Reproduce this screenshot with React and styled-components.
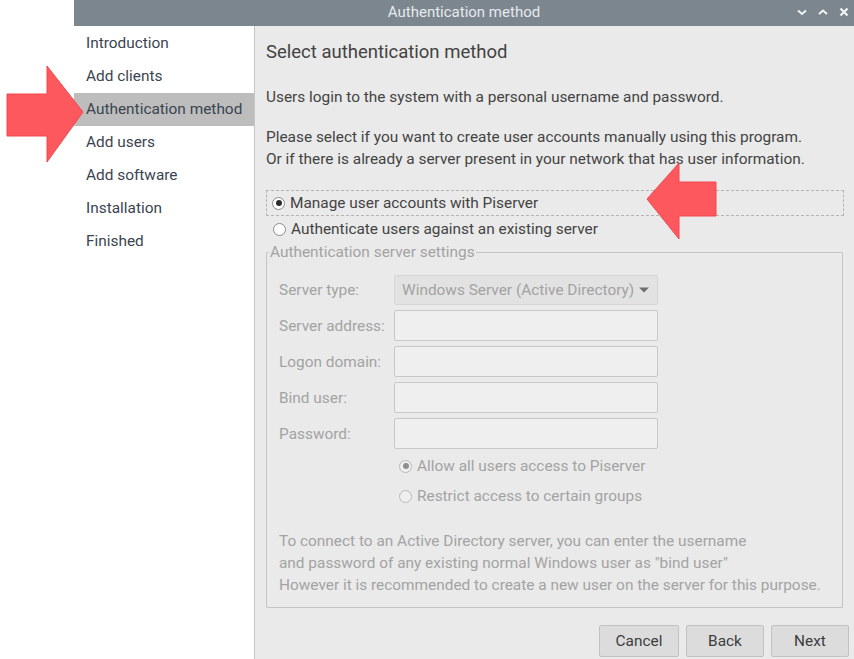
import React from "react";
import styled, { createGlobalStyle } from "styled-components";

const Global = createGlobalStyle`
  html, body { margin: 0; padding: 0; background: #ffffff; }
  body { font-family: Roboto, "Liberation Sans", sans-serif; width: 854px; height: 659px; overflow: hidden; }
  * { box-sizing: border-box; }
`;

const FS = "15.4px";

const Page = styled.div`
  position: relative;
  display: flex;
  width: 854px;
  height: 659px;
  padding-left: 74px;
`;

const Window = styled.div`
  flex: 1;
  display: flex;
  flex-direction: column;
`;

const TitleBar = styled.div`
  height: 26px;
  background: #7b868f;
  display: flex;
  align-items: center;
  justify-content: center;
  position: relative;
  color: #e6e9ec;
  font-size: 15px;
  padding-bottom: 2px;
`;

const Controls = styled.div`
  position: absolute;
  right: 4px;
  top: 0;
  height: 24px;
  display: flex;
  align-items: center;
  gap: 9px;
`;

const Body = styled.div`
  flex: 1;
  display: flex;
`;

const Sidebar = styled.div`
  width: 181px;
  background: #ffffff;
  border-right: 1px solid #c6c6c6;
  display: flex;
  flex-direction: column;
  padding-top: 1px;
`;

const NavItem = styled.div`
  height: 33px;
  line-height: 33px;
  padding-left: 12px;
  font-size: ${FS};
  color: #3a4450;
  background: ${(p) => (p.$active ? "#bdbdbd" : "transparent")};
  white-space: nowrap;
`;

const Main = styled.div`
  flex: 1;
  background: #eaeaea;
  padding: 15px 5px 0 11px;
  display: flex;
  flex-direction: column;
  color: #434343;
`;

const Heading = styled.div`
  font-size: 18.5px;
  line-height: 22px;
`;

const Para = styled.div`
  font-size: ${FS};
  line-height: 22px;
  margin-top: ${(p) => p.$mt}px;
`;

const RadioRow = styled.label`
  display: flex;
  align-items: center;
  height: 26px;
  font-size: ${FS};
  color: ${(p) => (p.$disabled ? "#a3a3a3" : "#434343")};
  border: 1px dashed ${(p) => (p.$focus ? "#b4b4b4" : "transparent")};
  padding-left: ${(p) => p.$pl ?? 5}px;
  margin-top: ${(p) => p.$mt ?? 0}px;
  width: ${(p) => (p.$w ? `${p.$w}px` : "auto")};
`;

const Circle = styled.span`
  width: ${(p) => p.$size}px;
  height: ${(p) => p.$size}px;
  border-radius: 50%;
  border: 1px solid ${(p) => (p.$disabled ? "#b9b9b9" : "#8a8a8a")};
  background: ${(p) => (p.$disabled ? "#efefef" : "#ffffff")};
  display: flex;
  align-items: center;
  justify-content: center;
  margin-right: 5px;
  flex-shrink: 0;
  &::after {
    content: "";
    width: 6px;
    height: 6px;
    border-radius: 50%;
    background: ${(p) => (p.$disabled ? "#8e8e8e" : "#2c2c2c")};
    display: ${(p) => (p.$checked ? "block" : "none")};
  }
`;

const Fieldset = styled.fieldset`
  margin: 0;
  border: 1px solid #c4c4c4;
  border-radius: 1px;
  padding: 13px 12px 0 12px;
  height: 366px;
  width: 577px;
  min-width: 0;
`;

const Legend = styled.legend`
  font-size: ${FS};
  line-height: 20px;
  color: #a3a3a3;
  padding: 0 1px;
  margin-left: -10px;
`;

const FormGrid = styled.div`
  display: grid;
  grid-template-columns: 115px 264px;
  row-gap: 5px;
  align-items: center;
`;

const Label = styled.div`
  font-size: ${FS};
  color: #a3a3a3;
  white-space: nowrap;
`;

const Dropdown = styled.div`
  height: 30px;
  background: #e2e2e2;
  border: 1px solid #d6d6d6;
  border-radius: 2px;
  display: flex;
  align-items: center;
  padding-left: 7px;
  font-size: ${FS};
  color: #a3a3a3;
  gap: 4px;
`;

const Entry = styled.div`
  height: 31px;
  background: #efefef;
  border: 1px solid #c8c8c8;
  border-radius: 2px;
`;

const SubRadios = styled.div`
  padding-left: 119px;
  margin-top: 4px;
  display: flex;
  flex-direction: column;
  gap: 4px;
`;

const Note = styled.div`
  margin-top: 21px;
  font-size: ${FS};
  line-height: 22px;
  color: #a3a3a3;
`;

const Footer = styled.div`
  display: flex;
  justify-content: flex-end;
  gap: 7px;
  margin-top: 17px;
`;

const Button = styled.div`
  width: ${(p) => p.$w}px;
  height: 32px;
  background: #dcdcdc;
  border: 1px solid #c2c2c2;
  border-radius: 2px;
  display: flex;
  align-items: center;
  justify-content: center;
  font-size: ${FS};
  color: #3d3d3d;
`;

const ArrowSvg = styled.svg`
  position: absolute;
  left: 0;
  top: 0;
  pointer-events: none;
`;

const nav = [
  "Introduction",
  "Add clients",
  "Authentication method",
  "Add users",
  "Add software",
  "Installation",
  "Finished",
];

function Radio({ children, checked, disabled, ...rest }) {
  return (
    <RadioRow $disabled={disabled} {...rest}>
      <Circle $size={13} $checked={checked} $disabled={disabled} />
      {children}
    </RadioRow>
  );
}

export default function App() {
  return (
    <>
      <Global />
      <Page>
        <Window>
          <TitleBar>
            Authentication method
            <Controls>
              <svg width="12" height="12" viewBox="0 0 12 12">
                <path d="M2 4.5 L6 8 L10 4.5" stroke="#f2f4f5" strokeWidth="2" fill="none" />
              </svg>
              <svg width="12" height="12" viewBox="0 0 12 12">
                <path d="M2 8 L6 4.5 L10 8" stroke="#f2f4f5" strokeWidth="2" fill="none" />
              </svg>
              <svg width="12" height="12" viewBox="0 0 12 12">
                <path d="M2.5 2.5 L9.5 9.5 M9.5 2.5 L2.5 9.5" stroke="#f2f4f5" strokeWidth="2.2" fill="none" />
              </svg>
            </Controls>
          </TitleBar>
          <Body>
            <Sidebar>
              {nav.map((n) => (
                <NavItem key={n} $active={n === "Authentication method"}>
                  {n}
                </NavItem>
              ))}
            </Sidebar>
            <Main>
              <Heading>Select authentication method</Heading>
              <Para $mt={23}>Users login to the system with a personal username and password.</Para>
              <Para $mt={18}>
                Please select if you want to create user accounts manually using this program.
                <br />
                Or if there is already a server present in your network that has user information.
              </Para>
              <Radio checked $focus $mt={20} $pl={5} $w={578}>
                Manage user accounts with Piserver
              </Radio>
              <Radio $pl={6}>Authenticate users against an existing server</Radio>
              <Fieldset>
                <Legend>Authentication server settings</Legend>
                <FormGrid>
                  <Label>Server type:</Label>
                  <Dropdown>
                    Windows Server (Active Directory)
                    <svg width="12" height="8" viewBox="0 0 12 8">
                      <path d="M1 1.5 L11 1.5 L6 6.5 Z" fill="#6e6e6e" />
                    </svg>
                  </Dropdown>
                  <Label>Server address:</Label>
                  <Entry />
                  <Label>Logon domain:</Label>
                  <Entry />
                  <Label>Bind user:</Label>
                  <Entry />
                  <Label>Password:</Label>
                  <Entry />
                </FormGrid>
                <SubRadios>
                  <Radio checked disabled $pl={0}>
                    Allow all users access to Piserver
                  </Radio>
                  <Radio disabled $pl={0}>
                    Restrict access to certain groups
                  </Radio>
                </SubRadios>
                <Note>
                  To connect to an Active Directory server, you can enter the username
                  <br />
                  and password of any existing normal Windows user as "bind user"
                  <br />
                  However it is recommended to create a new user on the server for this purpose.
                </Note>
              </Fieldset>
              <Footer>
                <Button $w={80}>Cancel</Button>
                <Button $w={78}>Back</Button>
                <Button $w={78}>Next</Button>
              </Footer>
            </Main>
          </Body>
        </Window>
        <ArrowSvg width="854" height="659">
          <polygon
            points="7,94 47,94 47,66 83,112 47,162 47,136 7,136"
            fill="#fd585d"
            stroke="#f0484e"
            strokeWidth="1"
          />
          <polygon
            points="716,182 679,182 679,163 647,199 679,239 679,216 716,216"
            fill="#fd585d"
            stroke="#f0484e"
            strokeWidth="1"
          />
        </ArrowSvg>
      </Page>
    </>
  );
}
